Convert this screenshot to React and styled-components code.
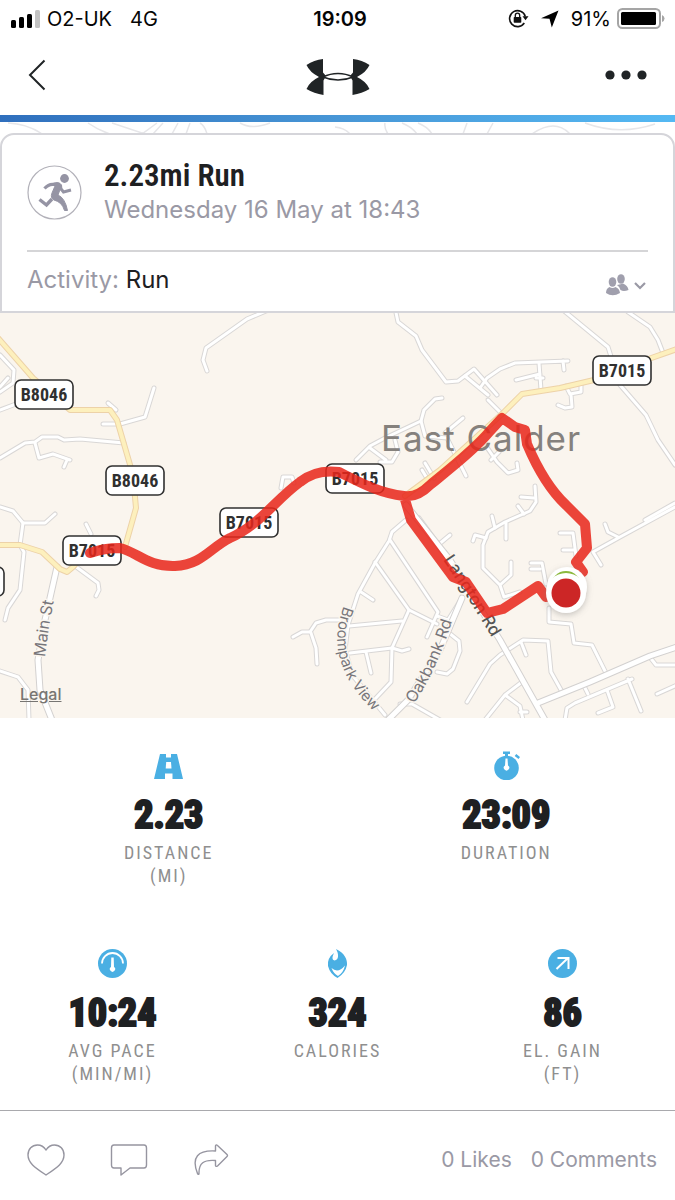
import React from "react";
import styled, { createGlobalStyle } from "styled-components";

const Global = createGlobalStyle`
  * { box-sizing: border-box; }
  body { margin: 0; background: #fff; color: #1e2022; font-family: Inter, "Liberation Sans", sans-serif; }
  button { border: 0; padding: 0; background: none; color: inherit; font: inherit; cursor: pointer; }
  h1, p, dl, dt, dd { margin: 0; }
  svg { display: block; }
`;

const condensed = `"Roboto Condensed", "Liberation Sans", sans-serif`;

const StatusBar = styled.div`
  display: grid;
  grid-template-columns: 1fr auto 1fr;
  align-items: center;
  height: 37px;
  padding: 0 10px 0 11px;
  font-size: 20px;
  color: #050505;
`;
const StatusGroup = styled.div`
  display: flex;
  align-items: center;
  justify-content: ${(p) => (p.$end ? "flex-end" : "flex-start")};
  gap: ${(p) => p.$gap}px;
`;
const Clock = styled.span`
  padding-left: 4px;
  font-weight: 600;
`;

const NavBar = styled.header`
  display: grid;
  grid-template-columns: 1fr auto 1fr;
  align-items: center;
  height: 78px;
  padding: 0 28px 2px;
`;
const NavButton = styled.button`
  justify-self: ${(p) => (p.$end ? "end" : "start")};
`;
const Accent = styled.div`
  height: 7px;
  background: linear-gradient(90deg, #2f6fbd, #4796d6 50%, #55b9f3);
`;
const Contours = styled.div`
  height: 11px;
  overflow: hidden;
`;

const Card = styled.section`
  border: 2px solid #d5d5da;
  border-radius: 14px 14px 0 0;
  padding: 0 25px;
  background: #fff;
`;
const CardHead = styled.div`
  display: flex;
  align-items: center;
  gap: 22px;
  height: 117px;
  border-bottom: 2px solid #d5d5d7;
`;
const Title = styled.h1`
  font: 600 31px/36px ${condensed};
  margin-top: -2px;
`;
const Subtitle = styled.p`
  font-size: 24px;
  line-height: 32px;
  color: #9a99a5;
`;
const ActivityRow = styled.div`
  display: flex;
  justify-content: space-between;
  align-items: flex-start;
  height: 59px;
  padding-top: 13px;
  font-size: 24px;
  line-height: 30px;
`;
const Muted = styled.span`
  color: #9a99a5;
`;
const PrivacyButton = styled.button`
  padding-top: 8px;
`;

const MapFrame = styled.section`
  position: relative;
  background: #faf5ee;
`;
const MapSvg = styled.svg`
  width: 100%;
  height: auto;
`;
const Legal = styled.a`
  position: absolute;
  left: 20px;
  bottom: 14px;
  font-size: 16px;
  line-height: 20px;
  font-weight: 500;
  color: #777572;
`;

const StatRow = styled.dl`
  display: grid;
  grid-template-columns: repeat(${(p) => p.$columns}, 1fr);
  height: 198px;
  padding-top: 33px;
`;
const Stat = styled.div`
  display: flex;
  flex-direction: column;
  align-items: center;
`;
const StatValue = styled.dd`
  order: 1;
  margin-top: 13px;
  font: 800 38px/44px ${condensed};
  -webkit-text-stroke: 2px #1e2022;
`;
const StatLabel = styled.dt`
  order: 2;
  margin-top: 4px;
  font: 400 18px/23px ${condensed};
  letter-spacing: 2px;
  color: #8f8f8f;
  text-align: center;
  white-space: pre-line;
`;

const Footer = styled.footer`
  display: flex;
  justify-content: space-between;
  align-items: center;
  height: 90px;
  margin-top: -4px;
  padding: 8px 18px 0 27px;
  border-top: 1px solid #a9a9ad;
`;
const Actions = styled.div`
  display: flex;
  gap: 45px;
`;
const Counts = styled.div`
  display: flex;
  gap: 19px;
  font-size: 21px;
  color: #9a99a5;
`;

const minorRoads = [
  "M0 355L14 370L13 383L0 392", "M0 387L8 378", "M0 410L16 404",
  "M207 371L203 360L206 348L247 319L266 311",
  "M154 388L145 417L120 424H103", "M108 403L116 410",
  "M0 458L25 443L35 442L42 437H58L64 440L80 439L124 443",
  "M35 443L39 458L53 454L70 460M67 460L64 467",
  "M0 507L13 511L23 523H45L55 514",
  "M23 523L20 545L24 552L20 590L8 608L5 620", "M86 524L91 534",
  "M281 488L283 477H292L294 483",
  "M0 671L18 677L28 690L29 720", "M75 566L98 583L99 590L96 596",
  "M293 637L302 632H310L316 623L326 620H345M311 633L316 648L317 664",
  "M395 308L398 322L416 336L422 350L446 382L458 381L474 369L497 395",
  "M465 376L488 395M480 388L487 378L500 369L515 363L568 361M563 361L564 370",
  "M516 380L540 374M539 363L541 390M536 378H543", "M488 400L502 414",
  "M566 386L570 394L581 392V385M571 394L572 407L565 408L558 405",
  "M563 310L608 347L620 385L646 415L658 440L675 465",
  "M628 312L650 327L658 340L663 353",
  "M442 398L435 399L424 410L421 421L385 438L370 446L356 460",
  "M421 421L425 436L447 438L466 476M463 418L445 433",
  "M370 448L386 460M380 462L392 462L398 452L395 440",
  "M425 463L434 478M422 470L428 480",
  "M486 446L497 462L508 473L518 470L517 463M491 460L499 452",
  "M535 486L536 502L530 511L505 522L488 532L483 545V568L500 585L504 597L520 592M500 585L511 575V562",
  "M521 497L534 498M518 506L524 514M492 516L495 528M506 523V539M473 541L475 535L486 538",
  "M645 520L675 503M675 507L620 537L593 552L601 565M605 524L608 532L618 537",
  "M560 533H573L576 556M563 550H575M531 563H542L546 584M531 569H540",
  "M406 520L392 532L389 541L375 563L358 594L348 625L345 650L353 676L385 715",
  "M390 540L438 612L427 637", "M375 562L409 610L392 648L391 682L375 699",
  "M361 592L373 600M409 610L437 624M437 616L448 620L462 598",
  "M349 626L402 621M350 653L392 648L402 651L409 649M366 652L371 673",
  "M449 633L459 641L460 651L453 669L447 674L437 672",
  "M438 545L450 535M419 518L451 562",
  "M467 702L490 664L500 655L523 640L548 641L551 672L561 690M521 642L526 655",
  "M549 608V622L571 624L574 643L592 645L606 673",
  "M565 720L567 708L575 703L632 679M628 679L641 711",
  "M584 686L588 694M607 690L613 707L598 713",
  "M649 656L656 665H677M657 694L677 685",
  "M522 682L505 695L485 720M505 695L520 706L523 720M520 712H527",
  "M400 704H412L440 720",
];
const streets = [
  "M57 567L45 620L38 660L40 690L52 720",
  "M462 598L440 650L408 700L388 720",
  "M406 505L450 560L500 640L545 720",
  "M538 703L590 682L650 656L677 647",
];
const mainRoads = [
  "M-2 338L33 378L70 410H110L117 420L133 475L136 508L125 547",
  "M-2 545H20L42 552L60 569L67 572L73 567L88 551",
  "M405 496L440 470L503 413L522 394L560 388L594 380L640 362L677 349",
];

function Roads({ paths, edge, fill, width }) {
  return (
    <g fill="none" strokeLinecap="round" strokeLinejoin="round">
      {paths.map((d) => <path key={d} d={d} stroke={edge} strokeWidth={width + 2} />)}
      {paths.map((d) => <path key={d} d={d} stroke={fill} strokeWidth={width} />)}
    </g>
  );
}

function Shield({ x, y, name }) {
  return (
    <g>
      <rect x={x - 29} y={y - 14} width="58" height="29" rx="6" fill="#fff" stroke="#303030" strokeWidth="1.6" />
      <text x={x} y={y + 7} textAnchor="middle" fontFamily='"Roboto Condensed", "Liberation Sans", sans-serif' fontWeight="700" fontSize="18" fill="#303030">{name}</text>
    </g>
  );
}

const shields = [
  [44, 394, "B8046"], [135, 480, "B8046"], [92, 550, "B7015"],
  [249, 522, "B7015"], [355, 478, "B7015"], [622, 370, "B7015"], [-25, 581, ""],
];

function RouteMap() {
  return (
    <MapSvg viewBox="0 313 675 405" role="img" aria-label="Map of the run around East Calder">
      <defs>
        <path id="broompark" d="M344 606C328 646 341 682 380 717" />
        <path id="mainst" d="M45 657Q48 630 55 594" />
        <path id="oakbank" d="M414 704Q438 668 453 618" />
        <path id="langton" d="M443 560Q466 594 498 648" />
        <filter id="shade" x="-40%" y="-40%" width="180%" height="180%">
          <feDropShadow dx="0" dy="2" stdDeviation="3" floodColor="#777" floodOpacity=".4" />
        </filter>
      </defs>
      <rect y="313" width="675" height="405" fill="#faf5ee" />
      <Roads paths={minorRoads} edge="#d9d7d6" fill="#fff" width={3} />
      <Roads paths={streets} edge="#d3d1d0" fill="#fff" width={5} />
      <Roads paths={mainRoads} edge="#edd2a8" fill="#fdf0bd" width={4} />
      <g fontFamily='Inter, "Liberation Sans", sans-serif' fill="#77757a" stroke="#faf5ee" strokeWidth="3" paintOrder="stroke">
        <text x="381" y="451" fontSize="35" letterSpacing="1" fill="#85817d" stroke="none">East Calder</text>
        <text fontSize="16"><textPath href="#mainst">Main St</textPath></text>
        <text fontSize="16"><textPath href="#oakbank">Oakbank Rd</textPath></text>
        <text fontSize="15"><textPath href="#broompark">Broompark View</textPath></text>
        <text fontSize="17" fontWeight="500" fill="#555"><textPath href="#langton">Langton Rd</textPath></text>
      </g>
      {shields.map(([x, y, name]) => <Shield key={`${x}-${y}`} x={x} y={y} name={name} />)}
      <path
        d="M90 553Q104 548 120 548C137 552 148 567 175 566C202 565 211 547 230 538C260 525 275 500 300 482Q316 469 339 472C361 483 379 493 404 496Q417 498 430 485C452 467 475 449 490 431L502 418L515 427L525 430L527 444C538 470 551 491 566 505L585 524L587 548L576 562L583 572M404 496L411 520L453 577L466 582L487 613L503 609L538 586L546 597"
        fill="none" stroke="#e8261b" strokeOpacity=".86" strokeWidth="10" strokeLinecap="round" strokeLinejoin="round"
      />
      <g filter="url(#shade)">
        <circle cx="567" cy="587" r="20" fill="#fff" />
        <circle cx="566" cy="586" r="15" fill="#8bb83c" />
        <circle cx="566" cy="593" r="20" fill="#fff" />
        <circle cx="566" cy="593" r="14.5" fill="#cc2726" />
      </g>
    </MapSvg>
  );
}

const SignalIcon = () => (
  <svg width="30" height="18" viewBox="0 0 30 18" aria-hidden="true">
    <rect x="0" y="10" width="5" height="8" rx="1.5" />
    <rect x="8" y="7" width="5" height="11" rx="1.5" />
    <rect x="16" y="4" width="5" height="14" rx="1.5" />
    <rect x="24" y="0" width="5" height="18" rx="1.5" fill="#c3c3c3" />
  </svg>
);
const LockIcon = () => (
  <svg width="21" height="19" viewBox="0 0 21 19" fill="none" stroke="#111" strokeWidth="1.6" aria-hidden="true">
    <path d="M16.3 14A8 8 0 1 1 17.3 7.5" />
    <path d="M14.5 7.3h6l-3 4z" fill="#111" stroke="none" />
    <rect x="5.7" y="8" width="7.6" height="5.8" rx=".8" fill="#111" stroke="none" />
    <path d="M7.3 8.5V6.4a2.2 2.2 0 0 1 4.4 0v2.1" strokeWidth="1.3" />
  </svg>
);
const LocationIcon = () => (
  <svg width="18" height="18" viewBox="0 0 18 18" aria-hidden="true">
    <path d="M17.500 .500L0 8.300L8.500 8.800L10.800 17.500Z" />
  </svg>
);
const BatteryIcon = () => (
  <svg width="48" height="21" viewBox="0 0 48 21" aria-hidden="true">
    <rect x="1" y="1" width="42" height="19" rx="4.5" fill="#fff" stroke="#a5a5a5" strokeWidth="2" />
    <rect x="4" y="4" width="35" height="13" rx="1.5" />
    <path d="M45 7q2.5 1 2.5 3.5T45 14z" fill="#a5a5a5" />
  </svg>
);
const Logo = () => (
  <svg width="64" height="42" viewBox="0 -4 64 42" fill="#202426" aria-label="Under Armour" role="img">
    <path d="M17 1V14.500L20 18L17.500 22.500V37Q8 35.500 .500 31Q3.500 23.500 13 19Q3.500 14 .500 7Q8 2 17 1Z" />
    <path d="M47 1V14.500L44 18L46.500 22.500V37Q56 35.500 63.500 31Q60.500 23.500 51 19Q60.500 14 63.500 7Q56 2 47 1Z" />
    <path d="M17 19Q24 15.500 32 15.500T47 19Q40 22 32 22T17 19Z" fill="#fff" stroke="#202426" strokeWidth="1.500" />
  </svg>
);
const RunnerIcon = () => (
  <svg width="55" height="55" viewBox="0 0 55 55" fill="none" stroke="#9594a4" aria-hidden="true">
    <circle cx="27.5" cy="27.5" r="26.5" strokeWidth="1.200" stroke="#b2b1b9" />
    <circle cx="37.5" cy="13.5" r="4.4" fill="#9594a4" stroke="none" />
    <path d="M17.5 23.5Q22 18.3 27.5 19.5" strokeWidth="3.2" />
    <path d="M25.5 18.5Q32 16 34.5 20Q36 22 32.5 26L31 30Q38 33 40.5 45.5H37.5Q35 37 27 35Q23 33 25 28L28 21Z" fill="#9594a4" strokeWidth="1" />
    <path d="M32.5 22L36.5 27L44 25" strokeWidth="3" />
    <path d="M12.5 34.5L19.5 40L25 34" strokeWidth="3.4" />
  </svg>
);
const PeopleIcon = () => (
  <svg width="42" height="24" viewBox="0 0 42 24" fill="#a09fad" aria-hidden="true">
    <ellipse cx="15" cy="6" rx="3.8" ry="4.8" />
    <path d="M11 12Q15 11 17 10.5Q22 12.500 22.500 17Q17.500 19 14.500 17Q14 14 11 12Z" />
    <ellipse cx="6.500" cy="9" rx="3.800" ry="4.800" />
    <path d="M3.500 14Q6.500 16 9.500 14Q13.500 15.500 14 20Q6.500 24.500 0 20Q0 15.500 3.500 14Z" />
    <path d="M29 10L34 15L39 10" fill="none" stroke="#9a99a5" strokeWidth="2.200" />
  </svg>
);

const blue = "#4aafe3";
const RoadIcon = () => (
  <svg width="29" height="29" viewBox="0 0 29 29" aria-hidden="true">
    <path d="M6 3H12V6.500H17V3H23L29 28H18.500V22.500H11V28H0Z" fill={blue} />
    <path d="M12.200 11H17L17.500 17.500H11.700Z" fill="#fff" />
  </svg>
);
const StopwatchIcon = () => (
  <svg width="29" height="29" viewBox="0 0 29 29" fill={blue} aria-hidden="true">
    <circle cx="14.500" cy="17" r="12.300" />
    <path d="M11 .5H18V3H16V6H13V3H11ZM22.700 5L24.300 3L28 6L26.500 8Z" />
    <path d="M13.500 7.500H15.500L16 14.500A2.700 2.700 0 1 1 13 14.500Z" fill="#fff" />
  </svg>
);
const PaceIcon = () => (
  <svg width="29" height="29" viewBox="0 0 29 29" aria-hidden="true">
    <circle cx="14.500" cy="14.500" r="14.500" fill={blue} />
    <path d="M4 14.500A10.500 10.500 0 0 1 25 14.500" fill="none" stroke="#fff" strokeWidth="1.800" />
    <path d="M13.300 8.500H15.700L16 18A2.600 2.600 0 1 1 13 18Z" fill="#fff" />
  </svg>
);
const FlameIcon = () => (
  <svg width="29" height="29" viewBox="0 0 29 29" aria-hidden="true">
    <path d="M13 0C22 4 24.500 11 24 16Q22.500 24 14.500 29Q7 25 5 17Q4 9 11 4Q7.500 11 11.500 11.500C16 11 16 5 13 0Z" fill={blue} />
    <path d="M8.500 19Q15 25 22 16.500Q20.500 23.500 15 27Q10.500 24.500 8.500 19Z" fill="#fff" />
  </svg>
);
const GainIcon = () => (
  <svg width="29" height="29" viewBox="0 0 29 29" fill="none" aria-hidden="true">
    <circle cx="14.500" cy="14.500" r="14.500" fill={blue} />
    <path d="M8.500 20L20 9M9.500 9H20.500V20" stroke="#fff" strokeWidth="2" />
  </svg>
);

const HeartIcon = () => (
  <svg width="38" height="32" viewBox="0 0 38 32" fill="none" stroke="#9695a0" strokeWidth="1.400" aria-hidden="true">
    <path d="M19 6C16.500 2 13.500 1 10.500 1C5 1 1 5 1 11C1 19 8 23.500 19 31C30 23.500 37 19 37 11C37 5 33 1 27.500 1C24.500 1 21.500 2 19 6Z" />
  </svg>
);
const CommentIcon = () => (
  <svg width="38" height="32" viewBox="0 0 38 32" fill="none" stroke="#9695a0" strokeWidth="1.400" strokeLinejoin="round" aria-hidden="true">
    <path d="M4 1H34Q36.500 1 36.500 4V21Q36.500 24 34 24H20L11 31V24H4Q1.500 24 1.500 21V4Q1.500 1 4 1Z" />
  </svg>
);
const ShareIcon = () => (
  <svg width="38" height="32" viewBox="0 0 38 32" fill="none" stroke="#9695a0" strokeWidth="1.400" strokeLinejoin="round" aria-hidden="true">
    <path d="M22.500 7V2Q23 0 24.500 1.500L34 10.500Q35 11.500 34 12.500L24.500 22Q23 23 22.500 21.500V16.500C11 15.500 5.500 19 6 30Q5 31 4.500 29.500C-2 13 5 6 22.500 7Z" />
  </svg>
);

function StatItem({ icon, value, label }) {
  return (
    <Stat>
      <StatLabel>{label}</StatLabel>
      <StatValue>{value}</StatValue>
      {icon}
    </Stat>
  );
}

export default function App() {
  return (
    <>
      <Global />
      <StatusBar>
        <StatusGroup $gap={18}>
          <StatusGroup $gap={6}>
            <SignalIcon />
            <span>O2-UK</span>
          </StatusGroup>
          <span>4G</span>
        </StatusGroup>
        <Clock>19:09</Clock>
        <StatusGroup $end $gap={6}>
          <StatusGroup $gap={12}>
            <LockIcon />
            <LocationIcon />
            <span>91%</span>
          </StatusGroup>
          <BatteryIcon />
        </StatusGroup>
      </StatusBar>
      <NavBar>
        <NavButton aria-label="Back">
          <svg width="18" height="32" viewBox="0 0 18 32" fill="none" stroke="#202426" strokeWidth="2">
            <path d="M16.500 1.500L2 16L16.500 30.500" />
          </svg>
        </NavButton>
        <Logo />
        <NavButton $end aria-label="More options">
          <svg width="42" height="10" viewBox="0 0 42 10" fill="#202426">
            <circle cx="5" cy="5" r="4.600" />
            <circle cx="21" cy="5" r="4.600" />
            <circle cx="37" cy="5" r="4.600" />
          </svg>
        </NavButton>
      </NavBar>
      <Accent />
      <Contours>
        <svg width="100%" height="12" viewBox="0 0 675 12" preserveAspectRatio="none" fill="none" stroke="#e6e6e9" strokeWidth="1.500" aria-hidden="true">
          <path d="M8 1Q28 2 42 12M88 1Q98 8 110 12M112 1L145 12M142 12L157 1M153 12L163 1M178 1L172 12M190 1L186 12M207 12Q205 4 200 1M240 1Q252 8 270 1M335 5Q345 6 350 12M385 1Q384 6 388 12M402 1Q412 5 417 12M418 1Q428 5 432 12M463 12L467 1M487 12L493 1M532 12Q555 -4 570 12M585 1Q620 14 655 2" />
        </svg>
      </Contours>
      <main>
        <Card>
          <CardHead>
            <RunnerIcon />
            <div>
              <Title>2.23mi Run</Title>
              <Subtitle>Wednesday 16 May at 18:43</Subtitle>
            </div>
          </CardHead>
          <ActivityRow>
            <p><Muted>Activity:</Muted> Run</p>
            <PrivacyButton aria-label="Change who can see this"><PeopleIcon /></PrivacyButton>
          </ActivityRow>
        </Card>
        <MapFrame>
          <RouteMap />
          <Legal href="#legal">Legal</Legal>
        </MapFrame>
        <StatRow $columns={2}>
          <StatItem icon={<RoadIcon />} value="2.23" label={"DISTANCE\n(MI)"} />
          <StatItem icon={<StopwatchIcon />} value="23:09" label="DURATION" />
        </StatRow>
        <StatRow $columns={3}>
          <StatItem icon={<PaceIcon />} value="10:24" label={"AVG PACE\n(MIN/MI)"} />
          <StatItem icon={<FlameIcon />} value="324" label="CALORIES" />
          <StatItem icon={<GainIcon />} value="86" label={"EL. GAIN\n(FT)"} />
        </StatRow>
      </main>
      <Footer>
        <Actions>
          <button aria-label="Like"><HeartIcon /></button>
          <button aria-label="Comment"><CommentIcon /></button>
          <button aria-label="Share"><ShareIcon /></button>
        </Actions>
        <Counts>
          <span>0 Likes</span>
          <span>0 Comments</span>
        </Counts>
      </Footer>
    </>
  );
}
